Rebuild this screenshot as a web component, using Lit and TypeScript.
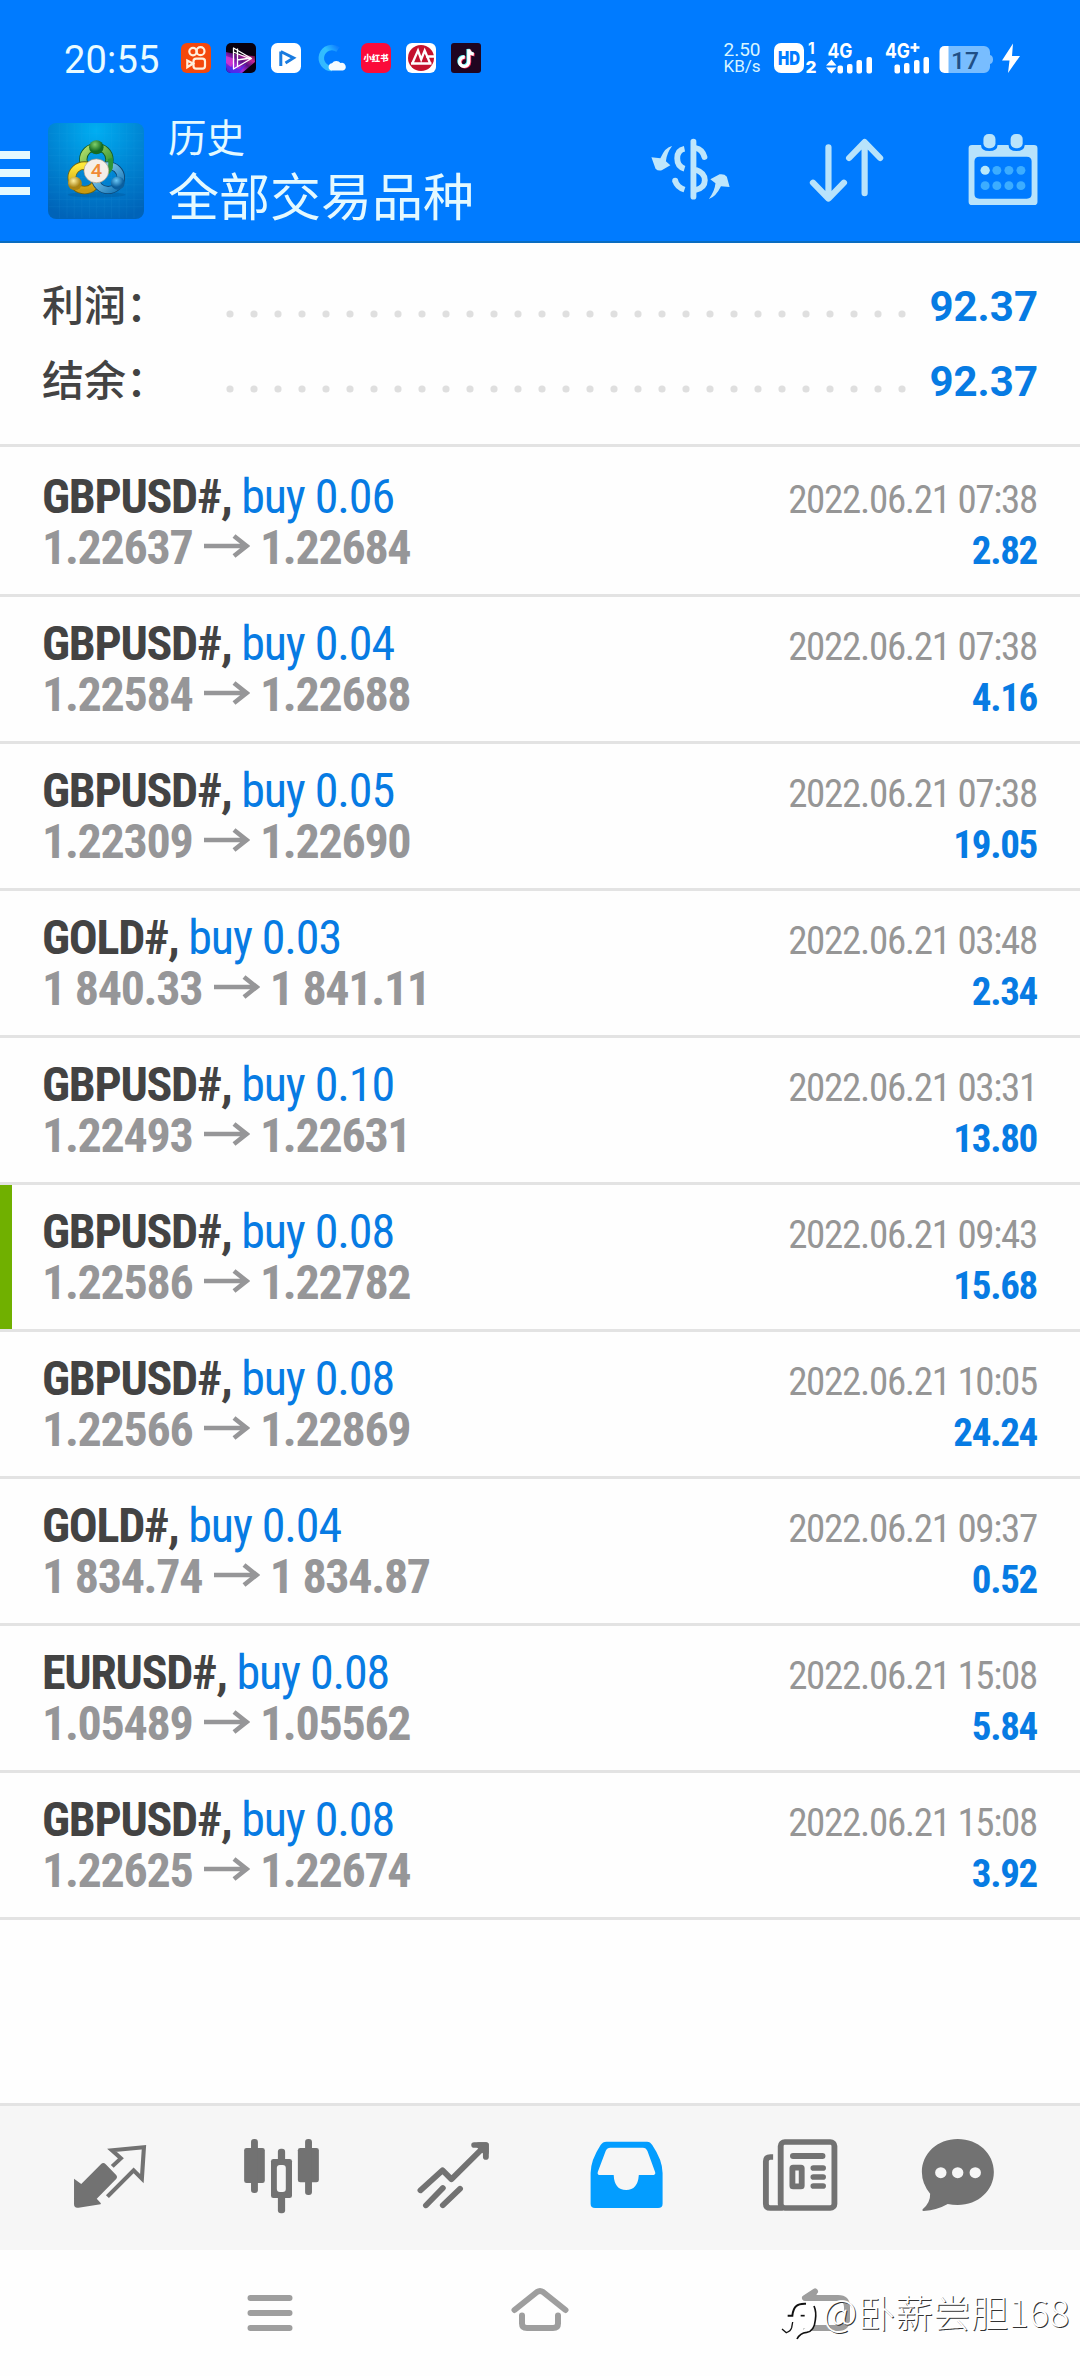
import { LitElement, html, svg, css } from "lit";
import { customElement, property } from "lit/decorators.js";

interface Deal {
  symbol: string;
  volume: string;
  open: string;
  close: string;
  time: string;
  profit: string;
  marked?: boolean;
}

const DEALS: Deal[] = [
  { symbol: "GBPUSD#", volume: "0.06", open: "1.22637", close: "1.22684", time: "2022.06.21 07:38", profit: "2.82" },
  { symbol: "GBPUSD#", volume: "0.04", open: "1.22584", close: "1.22688", time: "2022.06.21 07:38", profit: "4.16" },
  { symbol: "GBPUSD#", volume: "0.05", open: "1.22309", close: "1.22690", time: "2022.06.21 07:38", profit: "19.05" },
  { symbol: "GOLD#", volume: "0.03", open: "1 840.33", close: "1 841.11", time: "2022.06.21 03:48", profit: "2.34" },
  { symbol: "GBPUSD#", volume: "0.10", open: "1.22493", close: "1.22631", time: "2022.06.21 03:31", profit: "13.80" },
  { symbol: "GBPUSD#", volume: "0.08", open: "1.22586", close: "1.22782", time: "2022.06.21 09:43", profit: "15.68", marked: true },
  { symbol: "GBPUSD#", volume: "0.08", open: "1.22566", close: "1.22869", time: "2022.06.21 10:05", profit: "24.24" },
  { symbol: "GOLD#", volume: "0.04", open: "1 834.74", close: "1 834.87", time: "2022.06.21 09:37", profit: "0.52" },
  { symbol: "EURUSD#", volume: "0.08", open: "1.05489", close: "1.05562", time: "2022.06.21 15:08", profit: "5.84" },
  { symbol: "GBPUSD#", volume: "0.08", open: "1.22625", close: "1.22674", time: "2022.06.21 15:08", profit: "3.92" },
];

@customElement("status-bar")
class StatusBar extends LitElement {
  static styles = css`
    :host { display: flex; height: 78px; padding: 38px 59px 0 64px; box-sizing: border-box; color: #fff; font-family: Roboto, "Noto Sans CJK SC", sans-serif; align-items: flex-start; }
    .time { font-size: 38px; line-height: 44px; width: 117px; letter-spacing: 0.2px; color: #e9fbff; }
    .apps { display: flex; gap: 15px; margin-top: 5px; }
    .apps svg { width: 30px; height: 30px; display: block; overflow: visible; }
    .right { margin-left: auto; display: flex; align-items: flex-start; margin-top: 5px; }
    .speed { width: 50px; text-align: center; margin-right: 4px; color: #d8f5ff; line-height: 17px; margin-top: -2px; }
    .rate { font-size: 19px; }
    .unit { font-size: 17px; }
    .glyphs { width: 250px; height: 32px; display: block; overflow: visible; }
  `;
  render() {
    return html`
      <div class="time">20:55</div>
      <div class="apps">
        <svg viewBox="0 0 30 30"><rect width="30" height="30" rx="6" fill="#f4480c"/><g fill="none" stroke="#fff0dc" stroke-width="2.2"><circle cx="12" cy="8.6" r="3.7"/><circle cx="19.5" cy="8.2" r="4"/><rect x="12.5" y="15.6" width="11.5" height="10" rx="2.6"/><path d="M12 20.5L6.3 17.6v6.6z"/></g></svg>
        <svg viewBox="0 0 30 30"><defs><linearGradient id="vg" x1="0" y1="1" x2="1" y2="0"><stop offset="0" stop-color="#2a1fd8"/><stop offset=".35" stop-color="#a628d8"/><stop offset=".55" stop-color="#5a1080"/><stop offset=".75" stop-color="#c42895"/><stop offset="1" stop-color="#050008"/></linearGradient></defs><rect width="30" height="30" rx="5" fill="#080010"/><path d="M0 9L14 12 29 13V19L16 30H5Q0 30 0 24z" fill="url(#vg)"/><path d="M0 13l9 3-4 8-5-4z" fill="#e03bd0" opacity=".7"/><path d="M1 23l12 3 8-6-8 10H5z" fill="#4b2cf0" opacity=".8"/><path d="M7.5 5v21l18-10.5zM11.5 5.500v18M7.500 9l17 7M11 17l14-2" fill="none" stroke="#fff" stroke-width="1.3" stroke-linejoin="round"/></svg>
        <svg viewBox="0 0 30 30"><rect width="30" height="30" rx="6.500" fill="#fff"/><path d="M9.800 8.500v14.500M9.800 8.500L22.500 15l-8 5" fill="none" stroke="#187be0" stroke-width="3"/></svg>
        <svg viewBox="0 0 30 30"><defs><linearGradient id="cl" x1="0" y1="1" x2="1" y2="0"><stop offset="0" stop-color="#35b7ff"/><stop offset=".6" stop-color="#2fc0ff"/><stop offset="1" stop-color="#0f80ff"/></linearGradient></defs><path d="M22 6.500A10.500 10.500 0 1 0 16 25.500" fill="none" stroke="url(#cl)" stroke-width="5.500"/><path d="M15 27.500a3.800 3.800 0 0 1 1-7.300 5.200 5.200 0 0 1 8.500-.2 3.900 3.900 0 0 1 2.500 7.500z" fill="#f4fbff"/></svg>
        <svg viewBox="0 0 30 30"><rect width="30" height="30" rx="7" fill="#fb0b3a"/><text x="15" y="18.200" font-size="8.400" font-weight="900" fill="#fff" text-anchor="middle" font-family="Noto Sans CJK SC">小红书</text></svg>
        <svg viewBox="0 0 30 30"><rect width="30" height="30" rx="6" fill="#fff"/><circle cx="15" cy="15" r="13" fill="#c4122f"/><path d="M6.500 20L12 7.500l3.200 9 3.500-9L24 20M5 20.500h20.500M20 13.500h8" fill="none" stroke="#fff" stroke-width="2.300"/></svg>
        <svg viewBox="0 0 30 30"><rect width="30" height="30" rx="3" fill="#1f0520"/><g fill="none" stroke-width="3.200"><path d="M13.800 14.200a4.600 4.600 0 1 0 4 4.500V6.500c.5 3 2.700 4.500 5 4.700" stroke="#ff2b58" transform="translate(.8 .6)"/><path d="M13.800 14.200a4.600 4.600 0 1 0 4 4.500V6.500c.5 3 2.700 4.500 5 4.700" stroke="#58f0f0" transform="translate(-.8 -.6)"/><path d="M13.800 14.200a4.600 4.600 0 1 0 4 4.500V6.500c.5 3 2.700 4.500 5 4.700" stroke="#fff"/></g></svg>
      </div>
      <div class="right">
        <div class="speed"><div class="rate">2.50</div><div class="unit">KB/s</div></div>
        <svg class="glyphs" viewBox="771 43 250 32" fill="#fff" font-family="Inter, Roboto, sans-serif" font-weight="700">
          <rect x="774" y="43" width="30" height="30" rx="7"/>
          <text x="778" y="65" font-size="19" textLength="22" lengthAdjust="spacingAndGlyphs" font-weight="900" fill="#007bff">HD</text>
          <text x="808" y="54.300" font-size="15.500">1</text><text x="805.500" y="73" font-size="16.500" textLength="11" lengthAdjust="spacingAndGlyphs" font-weight="800">2</text>
          <text x="827.500" y="57.800" font-size="20" textLength="25" lengthAdjust="spacingAndGlyphs">4G</text>
          <text x="885" y="57.800" font-size="20" textLength="25" lengthAdjust="spacingAndGlyphs">4G</text>
          <path d="M910.500 47.500h9M915 43v9" stroke="#fff" stroke-width="2.600"/>
          <path d="M826 65.500l5.500-6 5 6zM826 67.500l5.500 6 5-6z"/>
          <rect x="837.500" y="65.500" width="5.500" height="8" rx="2"/><rect x="847" y="64" width="5.500" height="9.500" rx="2"/><rect x="856.500" y="60" width="5.500" height="13.500" rx="2"/><rect x="866.500" y="57" width="5.500" height="16.500" rx="2"/>
          <rect x="894.500" y="64.500" width="5.500" height="9" rx="2"/><rect x="904" y="63" width="5.500" height="10.500" rx="2"/><rect x="914" y="60" width="5.500" height="13.500" rx="2"/><rect x="923.500" y="57" width="5.500" height="16.500" rx="2"/>
          <path d="M947 46h37a6 6 0 0 1 6 6v3c2 .3 3 2 3 4.500s-1 4-3 4.500v3a6 6 0 0 1-6 6h-37z" fill="#78bdff"/>
          <path d="M948.500 46v27h-4a5 5 0 0 1-5-5V51a5 5 0 0 1 5-5z"/>
          <text x="951" y="68.500" font-size="24.500" font-weight="500" font-family="Roboto" fill="#1f4f86" textLength="28" lengthAdjust="spacingAndGlyphs">17</text>
          <path d="M1013 43.500l-11 17h7.500l-1.500 12.500 12-17h-8z"/>
        </svg>
      </div>`;
  }
}

@customElement("app-header")
class AppHeader extends LitElement {
  static styles = css`
    :host { display: flex; align-items: flex-start; height: 163px; box-sizing: border-box; color: #e4f9ff; font-family: "Noto Sans CJK SC", sans-serif; }
    svg { display: block; flex: none; }
    .menu { width: 30px; height: 44px; margin-top: 73px; }
    .logo { width: 96px; height: 96px; margin: 45px 0 0 18px; }
    .titles { margin: 34px 0 0 24px; flex: 1; }
    .small { font-size: 38.500px; line-height: 46px; }
    .big { font-size: 51px; line-height: 73px; white-space: nowrap; }
    .actions { display: flex; margin-top: 50px; }
    .actions svg { height: 80px; width: 155px; }
    .actions .cal { width: 152.500px; }
  `;
  render() {
    return html`
      <svg class="menu" viewBox="0 0 30 44" fill="#e4f9ff"><path d="M0 0h30v8H0zM0 18h30v8H0zM0 36h30v8H0z"/></svg>
      <svg class="logo" viewBox="139 308 278 289" preserveAspectRatio="none">
        <defs>
          <radialGradient id="bg" cx=".5" cy=".08" r=".95"><stop offset="0" stop-color="#00aef2"/><stop offset=".5" stop-color="#0086d4"/><stop offset="1" stop-color="#0063b8"/></radialGradient>
          <linearGradient id="gr" x1="0" y1="0" x2="1" y2="1"><stop offset="0" stop-color="#b6e06a"/><stop offset="1" stop-color="#1f8a2e"/></linearGradient>
          <linearGradient id="ye" x1="0" y1="0" x2="0" y2="1"><stop offset="0" stop-color="#ffe93a"/><stop offset="1" stop-color="#c99a10"/></linearGradient>
          <linearGradient id="bl" x1="0" y1="0" x2="1" y2="1"><stop offset="0" stop-color="#9adcf6"/><stop offset="1" stop-color="#1173b6"/></linearGradient>
          <radialGradient id="gb" cx=".4" cy=".3"><stop offset="0" stop-color="#7fd06b"/><stop offset="1" stop-color="#136b22"/></radialGradient>
          <radialGradient id="yb" cx=".4" cy=".3"><stop offset="0" stop-color="#fff1a0"/><stop offset="1" stop-color="#a98312"/></radialGradient>
          <radialGradient id="bb" cx=".4" cy=".3"><stop offset="0" stop-color="#6cc7f5"/><stop offset="1" stop-color="#0b5f9e"/></radialGradient>
        </defs>
        <rect x="139" y="308" width="278" height="289" rx="24" fill="url(#bg)"/>
        <path d="M172 310v285M194 310v285M215 310v285M237 310v285M259 310v285M280 310v285M302 310v285M323 310v285M345 310v285M367 310v285M388 310v285M141 340h274M141 362h274M141 384h274M141 406h274M141 428h274M141 450h274M141 472h274M141 494h274M141 516h274M141 538h274M141 560h274" stroke="#39b4f0" stroke-width="1.500" opacity=".16"/>
        <ellipse cx="280" cy="524" rx="84" ry="8" fill="#00508f" opacity=".3"/>
        <circle cx="279" cy="418" r="38" fill="none" stroke="#165b25" stroke-width="24"/><circle cx="279" cy="418" r="38" fill="none" stroke="url(#gr)" stroke-width="19"/>
        <circle cx="245" cy="473" r="37" fill="none" stroke="#6f6410" stroke-width="25"/><circle cx="245" cy="473" r="37" fill="none" stroke="url(#ye)" stroke-width="20"/>
        <circle cx="313" cy="473" r="37" fill="none" stroke="#0d4674" stroke-width="24"/><circle cx="313" cy="473" r="37" fill="none" stroke="url(#bl)" stroke-width="19"/>
        <path d="M319 415q6 30-8 42" stroke="#2d9438" stroke-width="14" fill="none"/>
        <circle cx="279" cy="381" r="21" fill="url(#gb)"/><circle cx="217" cy="490" r="20" fill="url(#yb)"/><circle cx="341" cy="489" r="20" fill="url(#bb)"/>
        <circle cx="279" cy="452" r="36" fill="#f5efe8" stroke="#a99a85" stroke-width="2"/>
        <text x="279" y="472" font-family="Roboto" font-weight="500" font-size="58" text-anchor="middle" fill="#f08a35">4</text>
      </svg>
      <div class="titles"><div class="small">历史</div><div class="big">全部交易品种</div></div>
      <div class="actions">
        <svg viewBox="225 324 450 240" preserveAspectRatio="none" fill="none" stroke="#bfe6fb" stroke-width="17">
          <path d="M444 365v165" stroke-linecap="round"/>
          <path d="M418 386Q397 390 397 415T418 446M391 482Q396 502 418 509"/>
          <circle cx="391" cy="482" r="8.500" fill="#bfe6fb" stroke="none"/>
          <path d="M450 384Q470 388 476 411" stroke-linecap="round"/>
          <path d="M450 449Q477 458 477 481T450 510" />
          <path d="M382 378Q362 381 348 415L322 412 334 446Q341 454 352 451L377 436 364 424Q366 400 382 378z" fill="#bfe6fb" stroke="none"/>
          <path d="M489 537Q509 531 524 499L549 501 541 470Q534 461 520 463L493 478 508 490Q506 513 489 537z" fill="#bfe6fb" stroke="none"/>
        </svg>
        <svg viewBox="675 324 450 240" preserveAspectRatio="none" fill="none" stroke="#b8e3fb" stroke-width="18" stroke-linecap="round" stroke-linejoin="round">
          <path d="M836 382v152M791 488l45 48 45-48M941 520V368M896 414l45-48 45 48"/>
        </svg>
        <svg class="cal" viewBox="1125 324 443 240" preserveAspectRatio="none">
          <path fill="#b8e3fb" fill-rule="evenodd" d="M1253 375h26q0 18 24 18t24-18h32q0 18 23 18t24-18h27q10 0 10 10v160q0 10-10 10h-180q-10 0-10-10V385q0-10 10-10zM1274 410q-14 0-14 14v98q0 14 14 14h138q14 0 14-14v-98q0-14-14-14z"/>
          <rect x="1286" y="342" width="35" height="43" rx="15" fill="#b8e3fb"/><rect x="1365" y="342" width="35" height="43" rx="15" fill="#b8e3fb"/>
          <circle cx="1291" cy="451" r="13.500" fill="#b8e9fb"/>
          ${[[1325, 451], [1360, 451], [1395, 451], [1291, 497], [1325, 497], [1360, 497], [1395, 497]].map(([x, y]) => svg`<circle cx=${x} cy=${y} r="13" fill="#3cadff"/>`)}
        </svg>
      </div>`;
  }
}

@customElement("summary-line")
class SummaryLine extends LitElement {
  @property() label = "";
  @property() value = "";
  static styles = css`
    :host { display: flex; height: 75px; align-items: flex-start; padding: 0 42px 0 42px; }
    .label { width: 184px; margin-top: -2px; font: 500 42px/62px "Noto Sans CJK SC", sans-serif; color: #434343; }
    .dots { width: 680px; height: 8px; margin-top: 36px; display: block; }
    .value { margin-left: auto; margin-top: 2px; font: 700 42px/62px Roboto, sans-serif; color: #077be3; }
  `;
  render() {
    return html`<div class="label">${this.label}</div>
      <svg class="dots" viewBox="0 0 680 8">${Array.from({ length: 29 }, (_, i) => svg`<circle cx=${4 + i * 24} cy="4" r="3.600" fill="#dfdfdf"/>`)}</svg>
      <div class="value">${this.value}</div>`;
  }
}

@customElement("deal-row")
class DealRow extends LitElement {
  @property({ attribute: false }) deal!: Deal;
  static styles = css`
    :host { display: block; height: 147px; box-sizing: border-box; border-bottom: 3px solid #e3e3e3; font-family: "Roboto Condensed", Roboto, sans-serif; font-stretch: 75%; letter-spacing: -1.300px; }
    .body { height: 144px; box-sizing: border-box; padding: 21px 43px 0 42px; }
    .marked { border-left: 12px solid #70b000; padding-left: 30px; }
    .line { display: flex; height: 51px; line-height: 51px; align-items: baseline; white-space: pre; }
    .symbol { font-size: 48px; font-weight: 700; color: #434343; }
    .side { font-size: 48px; color: #077be3; letter-spacing: -1.100px; }
    .price { font-size: 48px; font-weight: 700; color: #969698; }
    .arrow { width: 46px; height: 24px; margin: 0 9.500px 0 12px; position: relative; top: -6.500px; }
    .time { margin-left: auto; font-size: 39px; color: #969696; }
    .profit { margin-left: auto; font-size: 39px; font-weight: 700; color: #077be3; }
  `;
  render() {
    const d = this.deal;
    return html`<div class="body ${d.marked ? "marked" : ""}">
      <div class="line"><span class="symbol">${d.symbol}, </span><span class="side">buy ${d.volume}</span><span class="time">${d.time}</span></div>
      <div class="line"><span class="price">${d.open}</span><svg class="arrow" viewBox="0 0 46 24" fill="none" stroke="#969698" stroke-width="4.600"><path d="M0 12h43M30 2l12.500 10L30 22"/></svg><span class="price">${d.close}</span><span class="profit">${d.profit}</span></div>
    </div>`;
  }
}

@customElement("tab-bar")
class TabBar extends LitElement {
  static styles = css`
    :host { display: flex; height: 147px; box-sizing: border-box; border-top: 3px solid #e3e3e3; background: #f6f6f6; padding: 0 24px; }
    svg { width: 172px; height: 144px; display: block; flex: none; }
  `;
  render() {
    return html`
      <svg viewBox="69.700 48 499.500 432" preserveAspectRatio="none">
        <path d="M215 266l21 16 57-59q7-8 14 0l31 33q4 5 0 10l-57 60 12 14-1 3-64 10q-13 2-13-10z" fill="#727272"/>
        <path d="M326 229l25-24-26-24 93-9-6 94-24-25-76 79" fill="none" stroke="#727272" stroke-width="12"/>
      </svg>
      <svg viewBox="569.200 48 499.500 432" preserveAspectRatio="none" fill="#727272">
        <rect x="709" y="174" width="60" height="105" rx="7"/><rect x="729" y="147" width="20" height="162" rx="9"/>
        <rect x="865" y="174" width="61" height="103" rx="7"/><rect x="886" y="147" width="20" height="168" rx="9"/>
        <rect x="787" y="207" width="61" height="117" rx="7"/><rect x="807" y="176" width="21" height="194" rx="9"/>
        <rect x="804" y="225" width="26" height="81" rx="9" fill="#f6f6f6"/>
      </svg>
      <svg viewBox="1068.700 48 499.500 432" preserveAspectRatio="none" fill="none" stroke="#727272" stroke-width="17" stroke-linecap="round" stroke-linejoin="round">
        <path d="M1221 301l64-60 26 27 98-101M1377 165h34v36M1237 346l49-52M1286 346l50-50"/><path d="M1390 165h21v22z" fill="#727272"/>
      </svg>
      <svg viewBox="0 48 499.500 432" preserveAspectRatio="none">
        <path d="M193 155h118q9 0 15 10 30 46 30 84v92q0 13-13 13H160q-13 0-13-13v-92q0-38 29-84 6-10 17-10zM204 173q-9 0-13 9l-23 63q-3 10 7 10h39q2 45 36 45t37-45h38q13 0 9-10l-22-62q-4-10-13-10z" fill="#039dff" fill-rule="evenodd"/>
      </svg>
      <svg viewBox="499.500 48 499.500 432" preserveAspectRatio="none" fill="none" stroke="#727272" stroke-width="17">
        <rect x="699" y="156" width="156" height="198" rx="12"/>
        <path d="M677 201h-8q-13 0-13 13v127q0 13 13 13h36"/>
        <path d="M735 198h85" stroke-linecap="round" stroke-width="18"/>
        <path d="M794 234h28M794 261h28M794 288h28" stroke-linecap="round"/>
        <rect x="733" y="233" width="27" height="56" rx="2"/>
      </svg>
      <svg viewBox="999 48 499.500 432" preserveAspectRatio="none">
        <path d="M1213 147c60 0 105 44 105 99s-45 99-105 99q-15 0-29-3-30 18-70 21-6-1-2-6 22-20 21-46-24-30-24-65c0-55 45-99 104-99z" fill="#727272"/>
        <circle cx="1164" cy="248" r="16.500" fill="#f6f6f6"/><circle cx="1213" cy="248" r="16.500" fill="#f6f6f6"/><circle cx="1264" cy="248" r="16.500" fill="#f6f6f6"/>
      </svg>`;
  }
}

@customElement("nav-bar")
class NavBar extends LitElement {
  static styles = css`
    :host { display: flex; height: 126px; padding: 0 135px; }
    svg { width: 270px; height: 126px; display: block; flex: none; }
  `;
  render() {
    return html`
      <svg viewBox="-135 0 270 126" stroke="#9e9e9e" stroke-width="6" stroke-linecap="round"><path d="M-19.500 48h39M-19.500 63h39M-19.500 78h39"/></svg>
      <svg viewBox="-135 0 270 126" fill="none" stroke="#9e9e9e" stroke-width="6" stroke-linecap="round" stroke-linejoin="round"><path d="M-25.500 60L-3 42q3-2 6 0L25.500 60M-18 65.500v8q0 4.500 5 4.500h26q5 0 5-4.500v-8"/></svg>
      <svg viewBox="-135 0 270 126" fill="none" stroke="#9e9e9e" stroke-width="6" stroke-linecap="round" stroke-linejoin="round"><path d="M5 41.500l-10 6.500H28q9 0 9 9v12q0 9-9 9H-4"/><path d="M5 41.500l-10 6.500h9z" fill="#9e9e9e" stroke-width="4"/></svg>`;
  }
}

@customElement("app-root")
class AppRoot extends LitElement {
  static styles = css`
    :host { display: block; width: 1080px; height: 2376px; position: relative; background: #fefefe; overflow: hidden; }
    .page { display: flex; flex-direction: column; height: 2376px; }
    .top { background: #007bff; border-bottom: 2px solid #0a6cc0; flex: none; }
    .summary { height: 204px; box-sizing: border-box; padding-top: 31px; border-bottom: 3px solid #e3e3e3; flex: none; }
    .deals { padding-top: 3px; flex: 1; }
    .mark { position: absolute; left: 775px; top: 2280px; display: flex; align-items: flex-start; }
    .mark svg { width: 46px; height: 60px; display: block; }
    .name { font: 300 37.500px/54px "Noto Sans CJK SC", sans-serif; letter-spacing: 0.300px; margin: 4px 0 0 2px; color: #fff; text-shadow: 1px 1px 0 #333; white-space: nowrap; }
  `;
  render() {
    return html`<div class="page">
        <div class="top"><status-bar></status-bar><app-header></app-header></div>
        <div class="summary">
          <summary-line label="利润：" value="92.37"></summary-line>
          <summary-line label="结余：" value="92.37"></summary-line>
        </div>
        <div class="deals">${DEALS.map((d) => html`<deal-row .deal=${d}></deal-row>`)}</div>
        <tab-bar></tab-bar>
        <nav-bar></nav-bar>
      </div>
      <div class="mark">
        <svg viewBox="45 30 138 180" fill="none">
          <path d="M76 182q14-2 16-20l6-34q4-24 30-24 32-2 32 28 0 48-48 68" stroke="#fff" stroke-width="17"/>
          <path d="M100 112h50l6 60-56 8z" fill="#fff"/>
          <path d="M83 137h14q2-20 12-29 8-8 29-7" stroke="#111" stroke-width="6"/>
          <path d="M122 137h12" stroke="#111" stroke-width="5"/>
          <path d="M162 108q8 18 4 42-3 34-26 37-20 2-29 20" stroke="#111" stroke-width="5"/>
          <path d="M66 177l13 11q13-4 16-15l3-17" stroke="#111" stroke-width="4"/>
        </svg>
        <span class="name">@卧薪尝胆168</span>
      </div>`;
  }
}
